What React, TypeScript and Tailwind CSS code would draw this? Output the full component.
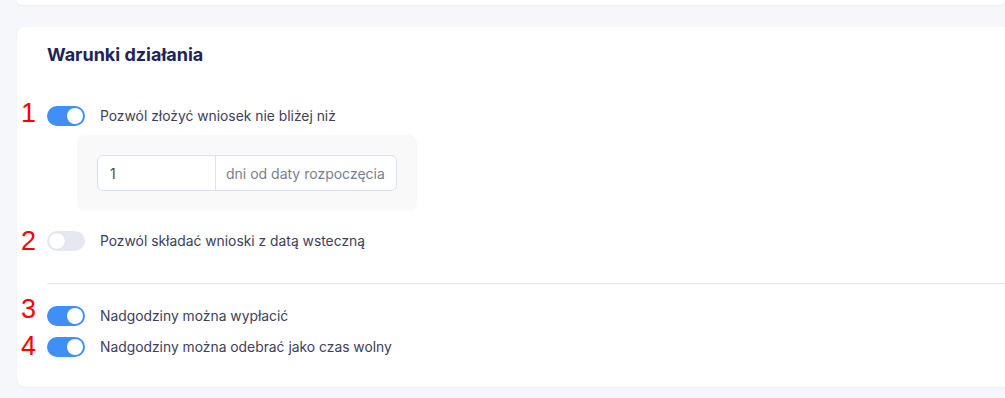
import React from "react";

function Toggle({ on }: { on: boolean }) {
  return (
    <div
      className={
        on
          ? "flex h-[20px] w-[38px] shrink-0 items-center justify-end rounded-full bg-[#3f8ff7] p-[2px]"
          : "flex h-[20px] w-[38px] shrink-0 items-center justify-start rounded-full bg-[#e5e8f0] p-[2px]"
      }
    >
      <div
        className={
          on
            ? "h-[16px] w-[16px] rounded-full bg-white"
            : "h-[16px] w-[16px] rounded-full bg-white shadow-[0_0_1px_rgba(0,0,0,0.15)]"
        }
      />
    </div>
  );
}

function Row({ on, label, num, numClass }: { on: boolean; label: string; num: string; numClass: string }) {
  return (
    <div className="-ml-[30px] flex h-[20px] items-center">
      <span
        className={"w-[30px] pl-[4px] text-[27px] leading-[20px] text-[#ff0000] " + numClass}
        style={{ fontFamily: "'Liberation Sans', Arial, sans-serif" }}
      >
        {num}
      </span>
      <Toggle on={on} />
      <span className="ml-[15px] text-[13.85px] leading-[20px] text-[#3d405a]">{label}</span>
    </div>
  );
}

export default function App() {
  return (
    <div
      className="min-h-[398px] overflow-hidden bg-[#f6f7fb] pl-[17px]"
      style={{ fontFamily: "Inter, 'Noto Sans', sans-serif" }}
    >
      <div className="h-[5px] rounded-b-lg bg-white shadow-[0_1px_2px_rgba(20,30,60,0.05)]" />
      <div className="mt-[22px] rounded-l-lg bg-white pt-[16px] pb-[30px] pl-[30px] shadow-[0_1px_2px_rgba(20,30,60,0.05)]">
        <h2 className="text-[18px] font-bold leading-[24px] text-[#1c2556]">Warunki działania</h2>
        <div className="mt-[39px] flex flex-col">
          <Row on={true} label="Pozwól złożyć wniosek nie bliżej niż" num="1" numClass="mb-[6px]" />
          <div className="mt-[9px] ml-[30px] w-[340px] rounded-lg bg-[#f9f9fa] p-[20px]">
            <div className="flex h-[36px] w-[300px] rounded-md border border-[#dbe1f4] bg-white">
              <div className="flex w-[118px] items-center border-r border-[#dbe1f4] pl-[12px] text-[14px] text-[#5a4a2a]">
                1
              </div>
              <div className="flex flex-1 items-center px-[10px] text-[14px] text-[#7b7e90]">
                dni od daty rozpoczęcia
              </div>
            </div>
          </div>
          <div className="mt-[20px]">
            <Row on={false} label="Pozwól składać wnioski z datą wsteczną" num="2" numClass="mb-[1px]" />
          </div>
          <div className="mt-[32px] h-px bg-[#e5e5e7]" />
          <div className="mt-[22px]">
            <Row on={true} label="Nadgodziny można wypłacić" num="3" numClass="mb-[15px]" />
          </div>
          <div className="mt-[11px]">
            <Row on={true} label="Nadgodziny można odebrać jako czas wolny" num="4" numClass="mb-[2px]" />
          </div>
        </div>
      </div>
    </div>
  );
}
